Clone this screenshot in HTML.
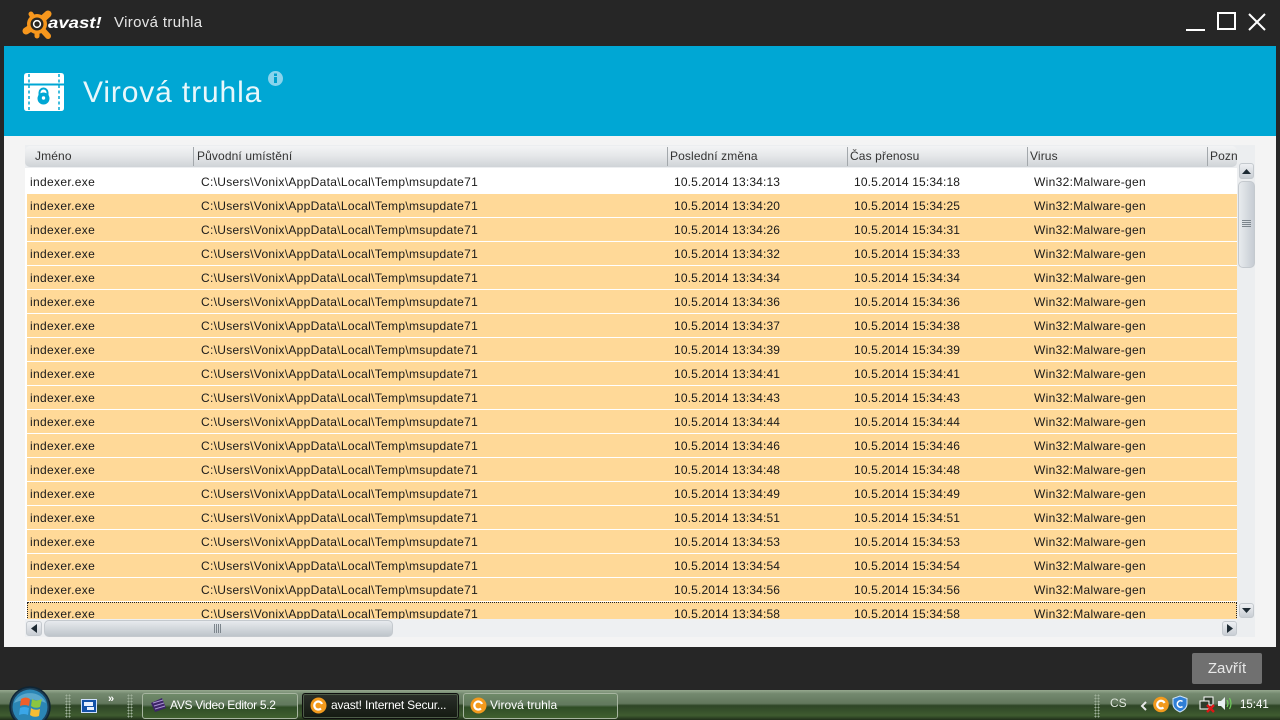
<!DOCTYPE html>
<html><head><meta charset="utf-8"><title>Virová truhla</title>
<style>
html,body{margin:0;padding:0;background:#262626;}
#p{position:relative;width:1280px;height:720px;overflow:hidden;background:#262626;font-family:"Liberation Sans",sans-serif;}
#p div,#p span.a,#p svg{position:absolute;}
.r{left:27px;width:1210px;height:23px;background:#ffd998;font-size:12px;color:#1a1a1a;line-height:24px;}
.r span{position:absolute;top:0;white-space:nowrap;}
.r .n{left:3px;letter-spacing:.34px}.r .l{left:174px;letter-spacing:.31px}.r .d{left:647px;letter-spacing:.15px}.r .t{left:827px;letter-spacing:.15px}.r .v{left:1007px;letter-spacing:.31px}
.h{top:148px;font-size:12px;color:#333;white-space:nowrap;line-height:16px;letter-spacing:.12px}
.s{top:147px;width:1px;height:19px;background:#a3a8ac;}
.btn{border-radius:3px;border:1px solid #c4c9ce;background:linear-gradient(#eef0f3,#c9ced4);box-sizing:border-box;}
.tb{top:693px;height:26px;box-sizing:border-box;border:1px solid #a7b5a0;border-radius:3px;background:linear-gradient(#6f8a69 0,#62795e 45%,#2f4d26 55%,#40602f 100%);color:#fff;font-size:12px;line-height:22px;white-space:nowrap;}
.grip{width:6px;height:24px;top:694px;background-image:radial-gradient(#9fb09a 0.8px,transparent 1px);background-size:3px 3px;}
</style></head><body><div id="p">

<!-- title bar -->
<svg style="left:20px;top:8px" width="36" height="34" viewBox="0 0 36 34">
<g stroke="#f7971d" stroke-linecap="round" fill="none">
<path d="M17 16L28 6" stroke-width="7"/>
<path d="M17 16L11 6" stroke-width="5"/>
<path d="M17 16L6 23" stroke-width="7"/>
<path d="M17 16L28 28" stroke-width="6"/>
<path d="M17 16L17 28" stroke-width="5"/>
</g>
<circle cx="17" cy="16" r="10" fill="#f7971d"/>
<circle cx="17" cy="16" r="6.500" fill="#2a2620"/><circle cx="17" cy="16" r="3.400" fill="none" stroke="#fff" stroke-width="1.500"/></svg>
<div style="left:48px;top:12px;color:#fff;font:italic bold 16px 'Liberation Sans',sans-serif;white-space:nowrap;line-height:24px;transform:scaleX(1.16);transform-origin:left center">avast!</div>
<div style="left:114px;top:13px;color:#e6e6e6;font-size:15px;line-height:20px;white-space:nowrap;letter-spacing:.35px">Virová truhla</div>
<div style="left:1186px;top:29px;width:19px;height:2px;background:#fff"></div>
<div style="left:1217px;top:12px;width:19px;height:18px;border:2px solid #fff;box-sizing:border-box"></div>
<svg style="left:1247px;top:12px" width="20" height="20"><path d="M2 2L18 18M18 2L2 18" stroke="#fff" stroke-width="2"/></svg>

<!-- blue header -->
<div style="left:4px;top:46px;width:1272px;height:90px;background:#00a7d4"></div>
<svg style="left:24px;top:73px" width="40" height="38" viewBox="0 0 40 38">
<path d="M3 0H37Q40 0 40 3V10.500H0V3Q0 0 3 0ZM0 12.500H40V35Q40 38 37 38H3Q0 38 0 35Z" fill="#fff"/>
<path d="M5 1V37M35 1V37" stroke="#00a7d4" stroke-width="1.500" stroke-dasharray="3 2.500"/>
<circle cx="19.500" cy="25.500" r="6" fill="#00a7d4"/><path d="M15.500 22V19.500a4 4 0 0 1 8 0V22" fill="none" stroke="#00a7d4" stroke-width="2"/><circle cx="19.500" cy="25" r="1.700" fill="#fff"/>
</svg>
<div style="left:83px;top:74px;color:#e8f7fb;font-size:30px;line-height:38px;white-space:nowrap;letter-spacing:.87px">Virová truhla</div>
<svg style="left:268px;top:71px" width="15" height="15"><circle cx="7.500" cy="7.500" r="7.500" fill="#8ad4ec"/><rect x="6" y="2.500" width="3" height="2.500" fill="#00a0cc"/><rect x="6" y="6" width="3" height="6" fill="#00a0cc"/></svg>

<!-- content -->
<div style="left:4px;top:136px;width:1272px;height:511px;background:#f4f4f4"></div>
<div style="left:25px;top:145px;width:1230px;height:492px;background:#eceef0"></div>
<div style="left:25px;top:168px;width:1212px;height:452px;background:#fff"></div>

<!-- table header -->
<div style="left:25px;top:146px;width:1212px;height:21px;border-radius:5px;background:linear-gradient(#f3f4f5 0,#e6e8ea 45%,#cfd3d7 100%)"></div>
<div class="s" style="left:193px"></div><div class="s" style="left:667px"></div><div class="s" style="left:847px"></div><div class="s" style="left:1027px"></div><div class="s" style="left:1207px"></div>
<div class="h" style="left:35px">Jméno</div>
<div class="h" style="left:197px">Původní umístění</div>
<div class="h" style="left:670px">Poslední změna</div>
<div class="h" style="left:850px">Čas přenosu</div>
<div class="h" style="left:1030px">Virus</div>
<div class="h" style="left:1210px;width:27px;overflow:hidden">Pozn</div>

<!-- rows -->
<div style="left:0;top:168px;width:1280px;height:451px;overflow:hidden">
<div class="r" style="top:2px;background:#fff"><span class="n">indexer.exe</span><span class="l">C:\Users\Vonix\AppData\Local\Temp\msupdate71</span><span class="d">10.5.2014 13:34:13</span><span class="t">10.5.2014 15:34:18</span><span class="v">Win32:Malware-gen</span></div>
<div class="r" style="top:26px"><span class="n">indexer.exe</span><span class="l">C:\Users\Vonix\AppData\Local\Temp\msupdate71</span><span class="d">10.5.2014 13:34:20</span><span class="t">10.5.2014 15:34:25</span><span class="v">Win32:Malware-gen</span></div>
<div class="r" style="top:50px"><span class="n">indexer.exe</span><span class="l">C:\Users\Vonix\AppData\Local\Temp\msupdate71</span><span class="d">10.5.2014 13:34:26</span><span class="t">10.5.2014 15:34:31</span><span class="v">Win32:Malware-gen</span></div>
<div class="r" style="top:74px"><span class="n">indexer.exe</span><span class="l">C:\Users\Vonix\AppData\Local\Temp\msupdate71</span><span class="d">10.5.2014 13:34:32</span><span class="t">10.5.2014 15:34:33</span><span class="v">Win32:Malware-gen</span></div>
<div class="r" style="top:98px"><span class="n">indexer.exe</span><span class="l">C:\Users\Vonix\AppData\Local\Temp\msupdate71</span><span class="d">10.5.2014 13:34:34</span><span class="t">10.5.2014 15:34:34</span><span class="v">Win32:Malware-gen</span></div>
<div class="r" style="top:122px"><span class="n">indexer.exe</span><span class="l">C:\Users\Vonix\AppData\Local\Temp\msupdate71</span><span class="d">10.5.2014 13:34:36</span><span class="t">10.5.2014 15:34:36</span><span class="v">Win32:Malware-gen</span></div>
<div class="r" style="top:146px"><span class="n">indexer.exe</span><span class="l">C:\Users\Vonix\AppData\Local\Temp\msupdate71</span><span class="d">10.5.2014 13:34:37</span><span class="t">10.5.2014 15:34:38</span><span class="v">Win32:Malware-gen</span></div>
<div class="r" style="top:170px"><span class="n">indexer.exe</span><span class="l">C:\Users\Vonix\AppData\Local\Temp\msupdate71</span><span class="d">10.5.2014 13:34:39</span><span class="t">10.5.2014 15:34:39</span><span class="v">Win32:Malware-gen</span></div>
<div class="r" style="top:194px"><span class="n">indexer.exe</span><span class="l">C:\Users\Vonix\AppData\Local\Temp\msupdate71</span><span class="d">10.5.2014 13:34:41</span><span class="t">10.5.2014 15:34:41</span><span class="v">Win32:Malware-gen</span></div>
<div class="r" style="top:218px"><span class="n">indexer.exe</span><span class="l">C:\Users\Vonix\AppData\Local\Temp\msupdate71</span><span class="d">10.5.2014 13:34:43</span><span class="t">10.5.2014 15:34:43</span><span class="v">Win32:Malware-gen</span></div>
<div class="r" style="top:242px"><span class="n">indexer.exe</span><span class="l">C:\Users\Vonix\AppData\Local\Temp\msupdate71</span><span class="d">10.5.2014 13:34:44</span><span class="t">10.5.2014 15:34:44</span><span class="v">Win32:Malware-gen</span></div>
<div class="r" style="top:266px"><span class="n">indexer.exe</span><span class="l">C:\Users\Vonix\AppData\Local\Temp\msupdate71</span><span class="d">10.5.2014 13:34:46</span><span class="t">10.5.2014 15:34:46</span><span class="v">Win32:Malware-gen</span></div>
<div class="r" style="top:290px"><span class="n">indexer.exe</span><span class="l">C:\Users\Vonix\AppData\Local\Temp\msupdate71</span><span class="d">10.5.2014 13:34:48</span><span class="t">10.5.2014 15:34:48</span><span class="v">Win32:Malware-gen</span></div>
<div class="r" style="top:314px"><span class="n">indexer.exe</span><span class="l">C:\Users\Vonix\AppData\Local\Temp\msupdate71</span><span class="d">10.5.2014 13:34:49</span><span class="t">10.5.2014 15:34:49</span><span class="v">Win32:Malware-gen</span></div>
<div class="r" style="top:338px"><span class="n">indexer.exe</span><span class="l">C:\Users\Vonix\AppData\Local\Temp\msupdate71</span><span class="d">10.5.2014 13:34:51</span><span class="t">10.5.2014 15:34:51</span><span class="v">Win32:Malware-gen</span></div>
<div class="r" style="top:362px"><span class="n">indexer.exe</span><span class="l">C:\Users\Vonix\AppData\Local\Temp\msupdate71</span><span class="d">10.5.2014 13:34:53</span><span class="t">10.5.2014 15:34:53</span><span class="v">Win32:Malware-gen</span></div>
<div class="r" style="top:386px"><span class="n">indexer.exe</span><span class="l">C:\Users\Vonix\AppData\Local\Temp\msupdate71</span><span class="d">10.5.2014 13:34:54</span><span class="t">10.5.2014 15:34:54</span><span class="v">Win32:Malware-gen</span></div>
<div class="r" style="top:410px"><span class="n">indexer.exe</span><span class="l">C:\Users\Vonix\AppData\Local\Temp\msupdate71</span><span class="d">10.5.2014 13:34:56</span><span class="t">10.5.2014 15:34:56</span><span class="v">Win32:Malware-gen</span></div>
<div class="r" style="top:434px;border:1px dotted #222;border-bottom:0;box-sizing:border-box;height:30px;line-height:22px"><span class="n" style="left:2px">indexer.exe</span><span class="l" style="left:173px">C:\Users\Vonix\AppData\Local\Temp\msupdate71</span><span class="d" style="left:646px">10.5.2014 13:34:58</span><span class="t" style="left:826px">10.5.2014 15:34:58</span><span class="v" style="left:1006px">Win32:Malware-gen</span></div>
</div>

<!-- vertical scrollbar -->
<div class="btn" style="left:1239px;top:163px;width:15px;height:16px"></div>
<svg style="left:1239px;top:163px" width="15" height="16"><path d="M3 11L7.500 6L12 11Z" fill="#1d2a33"/></svg>
<div class="btn" style="left:1238px;top:181px;width:17px;height:87px;border-radius:5px;background:linear-gradient(90deg,#e8ebee,#c6ccd3)"></div>
<svg style="left:1241px;top:219px" width="11" height="9"><path d="M1 1.500H10M1 3.500H10M1 5.500H10M1 7.500H10" stroke="#7c858c" stroke-width="1"/></svg>
<div class="btn" style="left:1239px;top:603px;width:15px;height:15px"></div>
<svg style="left:1239px;top:603px" width="15" height="15"><path d="M3 5L7.500 10L12 5Z" fill="#1d2a33"/></svg>

<!-- horizontal scrollbar -->
<div style="left:25px;top:619px;width:1212px;height:18px;background:#eef0f2"></div>
<div class="btn" style="left:26px;top:621px;width:16px;height:15px"></div>
<svg style="left:26px;top:621px" width="16" height="15"><path d="M11 3L5 7.500L11 12Z" fill="#1d2a33"/></svg>
<div class="btn" style="left:44px;top:620px;width:349px;height:17px;border-radius:5px;background:linear-gradient(#e7eaed,#bec5cb)"></div>
<svg style="left:213px;top:624px" width="9" height="9"><path d="M1.500 0V9M3.500 0V9M5.500 0V9M7.500 0V9" stroke="#7c858c" stroke-width="1"/></svg>
<div class="btn" style="left:1222px;top:621px;width:15px;height:15px"></div>
<svg style="left:1222px;top:621px" width="15" height="15"><path d="M5 3L11 7.500L5 12Z" fill="#1d2a33"/></svg>

<!-- close -->
<div style="left:1192px;top:653px;width:70px;height:31px;background:#707070;border-radius:2px;color:#e8e8e8;font-size:15px;line-height:32px;text-align:center">Zavřít</div>

<!-- taskbar -->
<div style="left:0;top:690px;width:1280px;height:30px;background:linear-gradient(#96a98f 0,#74896f 12%,#62775c 45%,#2e4526 52%,#3f5c30 85%,#1f2e1a 100%)"></div>
<svg style="left:9px;top:686px" width="44" height="34" viewBox="0 0 44 34">
<circle cx="21" cy="21" r="20" fill="#1c3f57" stroke="#0f2433" stroke-width="1.500"/>
<circle cx="21" cy="21" r="17.500" fill="#2b86b5"/>
<path d="M5 17A17 15 0 0 1 37 17Q21 10 5 17Z" fill="#6fb6d6" opacity=".7"/>
<path d="M12 13Q17 10 21 13L20 20Q16 18 11 20Z" fill="#ee5f2a"/>
<path d="M23 13Q27 16 33 13L31 21Q26 23 22 20Z" fill="#8cc63f"/>
<path d="M11 22Q15 20 20 22L19 29Q15 27 10 29Z" fill="#3aa6e8"/>
<path d="M22 22Q26 25 31 23L30 30Q25 32 21 29Z" fill="#f7bd34"/>
</svg>
<div class="grip" style="left:65px"></div>
<div class="grip" style="left:127px"></div>
<div style="left:81px;top:699px;width:16px;height:14px;background:#1452a8;border:1px solid #cfe0ff;box-sizing:border-box"></div>
<div style="left:84px;top:702px;width:9px;height:4px;background:#e8f0ff"></div>
<div style="left:87px;top:707px;width:7px;height:3px;background:#e8f0ff"></div>
<div style="left:108px;top:692px;color:#fff;font-size:11px;font-weight:bold;line-height:14px">»</div>

<div class="tb" style="left:142px;width:156px;padding-left:27px;letter-spacing:-.3px">AVS Video Editor 5.2</div>
<svg style="left:150px;top:697px" width="17" height="16"><path d="M1 6L12 1L16 11L5 15Z" fill="#3d2468"/><path d="M3 6L13 3M4 9L14 6M5 12L15 9" stroke="#a994d0" stroke-width="1"/></svg>
<div class="tb" style="left:302px;width:157px;padding-left:28px;letter-spacing:-.2px;background:linear-gradient(#2a2f29,#141a12);border-color:#0e0e0e;box-shadow:inset 0 0 0 1px #4d5c48">avast! Internet Secur...</div>
<svg style="left:310px;top:697px" width="17" height="17"><circle cx="8.500" cy="8.500" r="8" fill="#f39a1d"/><path d="M11 11.500A4 4 0 1 1 12 7" fill="none" stroke="#fff" stroke-width="2.200"/></svg>
<div class="tb" style="left:463px;width:155px;padding-left:26px">Virová truhla</div>
<svg style="left:470px;top:697px" width="17" height="17"><circle cx="8.500" cy="8.500" r="8" fill="#f39a1d"/><path d="M11 11.500A4 4 0 1 1 12 7" fill="none" stroke="#fff" stroke-width="2.200"/></svg>

<div class="grip" style="left:1094px"></div>
<div style="left:1110px;top:696px;color:#dfe6dc;font-size:12px;line-height:14px">CS</div>
<svg style="left:1139px;top:700px" width="10" height="12"><path d="M7 2L3 6L7 10" fill="none" stroke="#e8e8e8" stroke-width="2"/></svg>
<svg style="left:1153px;top:696px" width="16" height="17"><circle cx="8" cy="8.500" r="7.800" fill="#f39a1d"/><path d="M10.500 11.500A3.800 3.800 0 1 1 11.500 7" fill="none" stroke="#fff" stroke-width="2.200"/></svg>
<svg style="left:1172px;top:695px" width="16" height="18"><path d="M8 1L15 3.500V9Q15 14 8 17Q1 14 1 9V3.500Z" fill="#2f7fd6" stroke="#cfe4fa" stroke-width="1"/><path d="M10.500 6.500A3.200 3.200 0 1 0 10.500 11.500" fill="none" stroke="#fff" stroke-width="1.500"/></svg>
<svg style="left:1199px;top:696px" width="16" height="17"><rect x="5" y="1" width="9" height="8" fill="#2d3b2b" stroke="#fff"/><rect x="1" y="5" width="9" height="8" fill="#2d3b2b" stroke="#fff"/><path d="M8 9L15 16M15 9L8 16" stroke="#e01515" stroke-width="2.400"/></svg>
<svg style="left:1217px;top:695px" width="17" height="17"><path d="M1 6H4L8 2V15L4 11H1Z" fill="#e8eef0"/><path d="M10 5Q12 8.500 10 12M12.500 3Q15.500 8.500 12.500 14" fill="none" stroke="#6fcf5a" stroke-width="1.200"/></svg>
<div style="left:1240px;top:698px;color:#fff;font-size:11.500px;line-height:14px">15:41</div>

</div></body></html>
